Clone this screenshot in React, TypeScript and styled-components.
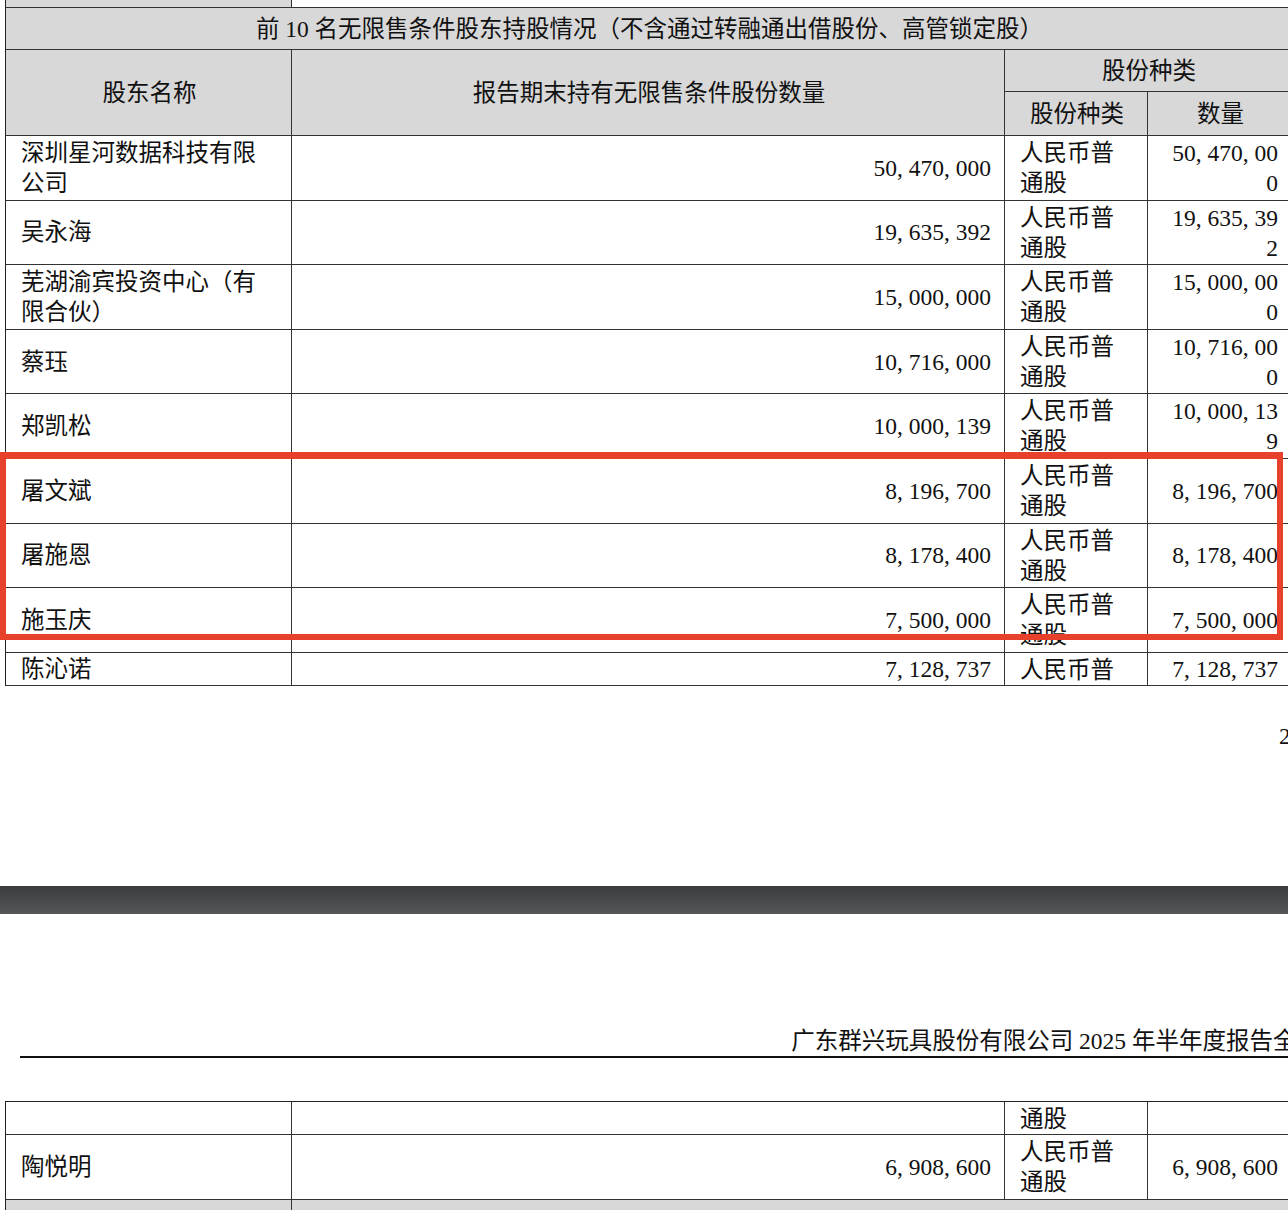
import styled, { createGlobalStyle } from 'styled-components'

const Global = createGlobalStyle`
  html, body { margin: 0; padding: 0; background: #fff; overflow: hidden; }
  body { width: 1288px; height: 1210px; font-family: "Liberation Serif", "Noto Sans CJK SC", serif; color: #111; }
`

const Page = styled.div`
  position: relative;
  width: 1288px;
  height: 1210px;
  overflow: hidden;
`

const Grid = styled.div<{ $top: number }>`
  margin: ${(p) => p.$top}px 0 0 5px;
  width: 1286px;
  display: grid;
  grid-template-columns: 286px 713px 143px 144px;
  border-left: 1px solid #222;
  border-top: 1px solid #222;
`

const Cell = styled.div<{ $h: number; $head?: boolean; $align?: 'left' | 'right' | 'center'; $top?: boolean; $span?: number; $rows?: number }>`
  height: ${(p) => p.$h}px;
  box-sizing: border-box;
  overflow: hidden;
  background: ${(p) => (p.$head ? '#d8d8d8' : '#fff')};
  border-right: 1px solid #333;
  border-bottom: 1px solid #333;
  grid-column: span ${(p) => p.$span ?? 1};
  grid-row: span ${(p) => p.$rows ?? 1};
  display: flex;
  align-items: ${(p) => (p.$top ? 'flex-start' : 'center')};
  justify-content: ${(p) => (p.$align === 'right' ? 'flex-end' : p.$align === 'center' ? 'center' : 'flex-start')};
  text-align: ${(p) => p.$align ?? 'left'};
  padding: ${(p) => (p.$top ? '2px' : '0')} 13px 0 15px;
  font-size: 23.5px;
  line-height: 30px;
  white-space: pre-line;
`

const RedBox = styled.div`
  position: absolute;
  left: 0;
  top: 452px;
  width: 1283px;
  height: 188px;
  box-sizing: border-box;
  border: 6px solid #e8412b;
  border-top-width: 7px;
  pointer-events: none;
`

const PageNum = styled.div`
  position: absolute;
  left: 1279px;
  top: 724px;
  font-size: 23px;
`

const Divider = styled.div`
  margin-top: 200px;
  height: 28px;
  background: linear-gradient(#393b3d, #55585b);
`

const Header = styled.div`
  margin: 114px 0 0 20px;
  height: 28px;
  border-bottom: 2px solid #111;
  display: flex;
  justify-content: flex-end;
  white-space: nowrap;
  font-size: 23.5px;
  line-height: 26px;
  width: 1300px;
`

type Row = { name: string; qty: string; kind: string; num: string }

const rows: Row[] = [
  { name: '深圳星河数据科技有限\n公司', qty: '50, 470, 000', kind: '人民币普\n通股', num: '50, 470, 00\n0' },
  { name: '吴永海', qty: '19, 635, 392', kind: '人民币普\n通股', num: '19, 635, 39\n2' },
  { name: '芜湖渝宾投资中心（有\n限合伙）', qty: '15, 000, 000', kind: '人民币普\n通股', num: '15, 000, 00\n0' },
  { name: '蔡珏', qty: '10, 716, 000', kind: '人民币普\n通股', num: '10, 716, 00\n0' },
  { name: '郑凯松', qty: '10, 000, 139', kind: '人民币普\n通股', num: '10, 000, 13\n9' },
  { name: '屠文斌', qty: '8, 196, 700', kind: '人民币普\n通股', num: '8, 196, 700' },
  { name: '屠施恩', qty: '8, 178, 400', kind: '人民币普\n通股', num: '8, 178, 400' },
  { name: '施玉庆', qty: '7, 500, 000', kind: '人民币普\n通股', num: '7, 500, 000' },
]

const multi = (s: string) => s.includes('\n')

export default function App() {
  return (
    <Page>
      <Global />
      <Grid $top={-2}>
        <Cell $h={9} $head />
        <Cell $h={9} $span={3} />
        <Cell $h={42} $head $span={4} $align="center">前 10 名无限售条件股东持股情况（不含通过转融通出借股份、高管锁定股）</Cell>
        <Cell $h={86} $head $rows={2} $align="center">股东名称</Cell>
        <Cell $h={86} $head $rows={2} $align="center">报告期末持有无限售条件股份数量</Cell>
        <Cell $h={42} $head $span={2} $align="center">股份种类</Cell>
        <Cell $h={44} $head $align="center">股份种类</Cell>
        <Cell $h={44} $head $align="center">数量</Cell>
        {rows.map((r) => (
          <>
            <Cell key={r.name + 'a'} $h={64.6} $top={multi(r.name)}>{r.name}</Cell>
            <Cell key={r.name + 'b'} $h={64.6} $align="right">{r.qty}</Cell>
            <Cell key={r.name + 'c'} $h={64.6} $top>{r.kind}</Cell>
            <Cell key={r.name + 'd'} $h={64.6} $align="right" $top={multi(r.num)}>{r.num}</Cell>
          </>
        ))}
        <Cell $h={33}>陈沁诺</Cell>
        <Cell $h={33} $align="right">7, 128, 737</Cell>
        <Cell $h={33} $top>{'人民币普\n通股'}</Cell>
        <Cell $h={33} $align="right">7, 128, 737</Cell>
      </Grid>
      <PageNum>2</PageNum>
      <Divider />
      <Header>广东群兴玩具股份有限公司 2025 年半年度报告全文</Header>
      <Grid $top={43}>
        <Cell $h={33} />
        <Cell $h={33} />
        <Cell $h={33} $top>通股</Cell>
        <Cell $h={33} />
        <Cell $h={65}>陶悦明</Cell>
        <Cell $h={65} $align="right">6, 908, 600</Cell>
        <Cell $h={65} $top>{'人民币普\n通股'}</Cell>
        <Cell $h={65} $align="right">6, 908, 600</Cell>
        <Cell $h={20} $head />
        <Cell $h={20} $head $span={3} />
      </Grid>
      <RedBox />
    </Page>
  )
}
